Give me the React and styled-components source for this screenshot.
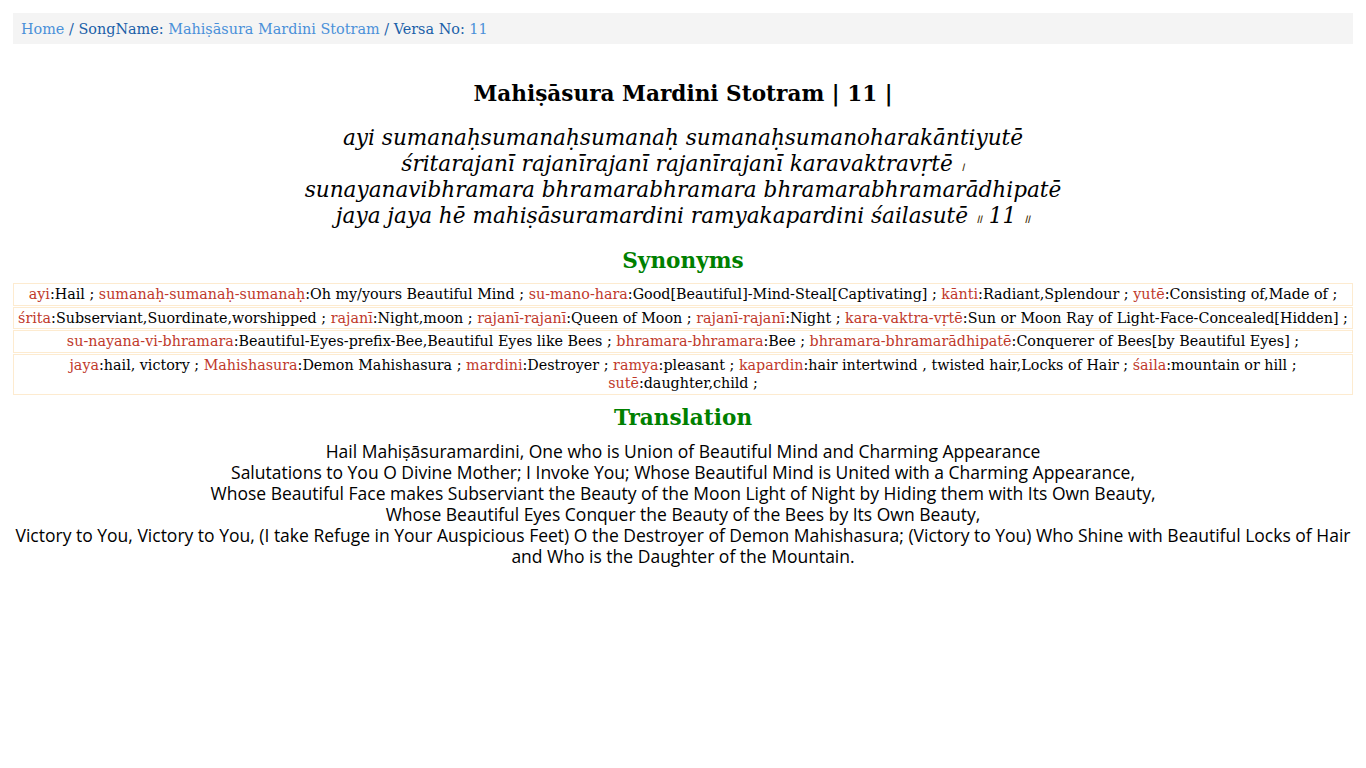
import React from "react";
import styled, { createGlobalStyle } from "styled-components";

const GlobalStyle = createGlobalStyle`
  body {
    margin: 8px;
    background: #fff;
    font-family: "DejaVu Serif", serif;
    color: #000;
  }
`;

const verse = [
  "ayi sumanaḥsumanaḥsumanaḥ sumanaḥsumanoharakāntiyutē",
  "śritarajanī rajanīrajanī rajanīrajanī karavaktravṛtē",
  "sunayanavibhramara bhramarabhramara bhramarabhramarādhipatē",
  "jaya jaya hē mahiṣāsuramardini ramyakapardini śailasutē",
];

const synonyms = [
  [
    ["ayi", "Hail"],
    ["sumanaḥ-sumanaḥ-sumanaḥ", "Oh my/yours Beautiful Mind"],
    ["su-mano-hara", "Good[Beautiful]-Mind-Steal[Captivating]"],
    ["kānti", "Radiant,Splendour"],
    ["yutē", "Consisting of,Made of"],
  ],
  [
    ["śrita", "Subserviant,Suordinate,worshipped"],
    ["rajanī", "Night,moon"],
    ["rajanī-rajanī", "Queen of Moon"],
    ["rajanī-rajanī", "Night"],
    ["kara-vaktra-vṛtē", "Sun or Moon Ray of Light-Face-Concealed[Hidden]"],
  ],
  [
    ["su-nayana-vi-bhramara", "Beautiful-Eyes-prefix-Bee,Beautiful Eyes like Bees"],
    ["bhramara-bhramara", "Bee"],
    ["bhramara-bhramarādhipatē", "Conquerer of Bees[by Beautiful Eyes]"],
  ],
  [
    ["jaya", "hail, victory"],
    ["Mahishasura", "Demon Mahishasura"],
    ["mardini", "Destroyer"],
    ["ramya", "pleasant"],
    ["kapardin", "hair intertwind , twisted hair,Locks of Hair"],
    ["śaila", "mountain or hill"],
    ["sutē", "daughter,child"],
  ],
];

const translation = [
  "Hail Mahiṣāsuramardini, One who is Union of Beautiful Mind and Charming Appearance",
  "Salutations to You O Divine Mother; I Invoke You; Whose Beautiful Mind is United with a Charming Appearance,",
  "Whose Beautiful Face makes Subserviant the Beauty of the Moon Light of Night by Hiding them with Its Own Beauty,",
  "Whose Beautiful Eyes Conquer the Beauty of the Bees by Its Own Beauty,",
  "Victory to You, Victory to You, (I take Refuge in Your Auspicious Feet) O the Destroyer of Demon Mahishasura; (Victory to You) Who Shine with Beautiful Locks of Hair and Who is the Daughter of the Mountain.",
];

export default function App() {
  return (
    <>
      <GlobalStyle />
      <Page>
        <Breadcrumb>
          <Crumb href="#">Home</Crumb>
          <Sep> / SongName: </Sep>
          <Crumb href="#">Mahiṣāsura Mardini Stotram</Crumb>
          <Sep> / Versa No: </Sep>
          <Crumb href="#">11</Crumb>
        </Breadcrumb>

        <Title>Mahiṣāsura Mardini Stotram | 11 |</Title>

        <Verse>
          {verse.map((line, i) => (
            <VerseLine key={i}>
              {line}
              {i === 1 && (
                <>
                  {" "}
                  <Danda>।</Danda>
                </>
              )}
              {i === 3 && (
                <>
                  {" "}
                  <Danda>॥</Danda> 11 <Danda>॥</Danda>
                </>
              )}
            </VerseLine>
          ))}
        </Verse>

        <SectionHeading>Synonyms</SectionHeading>
        <SynTable>
          <tbody>
            {synonyms.map((row, i) => (
              <tr key={i}>
                <SynCell>
                  {row.map(([term, meaning], j) => (
                    <React.Fragment key={j}>
                      <Term>{term}</Term>:{meaning} ;{" "}
                    </React.Fragment>
                  ))}
                </SynCell>
              </tr>
            ))}
          </tbody>
        </SynTable>

        <SectionHeading $tight>Translation</SectionHeading>
        <Translation>
          {translation.map((line, i) => (
            <div key={i}>{line}</div>
          ))}
        </Translation>
      </Page>
    </>
  );
}

const Page = styled.div`
  padding: 5px;
`;

const Breadcrumb = styled.nav`
  background: #f4f4f4;
  padding: 7px 8px 5px;
  font-size: 14.4px;
  line-height: 19px;
`;

const Crumb = styled.a`
  color: #4a90d9;
  text-decoration: none;
`;

const Sep = styled.span`
  color: #1a5fa8;
  white-space: pre;
`;

const Title = styled.h2`
  margin: 37px 0 0;
  text-align: center;
  font-size: 21.6px;
  line-height: 26px;
  font-weight: bold;
`;

const Verse = styled.div`
  margin-top: 18px;
  text-align: center;
  font-style: italic;
  font-size: 21.6px;
  line-height: 26px;
`;

const VerseLine = styled.div`
  height: 26px;
`;

const Danda = styled.span`
  font-size: 12px;
  line-height: 0;
  color: #3a2a00;
`;

const SectionHeading = styled.h3`
  margin: ${(p) => (p.$tight ? "8px 0 9px" : "18px 0 7px")};
  text-align: center;
  color: #008000;
  font-size: 21.6px;
  line-height: 28px;
  font-weight: bold;
`;

const SynTable = styled.table`
  width: 100%;
  border-collapse: separate;
  border-spacing: 0 1px;
  font-size: 14.3px;
`;

const SynCell = styled.td`
  border: 1px solid #fdebd0;
  text-align: center;
  padding: 1px 2px;
  line-height: 18.5px;
`;

const Term = styled.span`
  color: #c0392b;
`;

const Translation = styled.div`
  text-align: center;
  font-family: "Open Sans", sans-serif;
  font-size: 17.5px;
  line-height: 21px;
`;
